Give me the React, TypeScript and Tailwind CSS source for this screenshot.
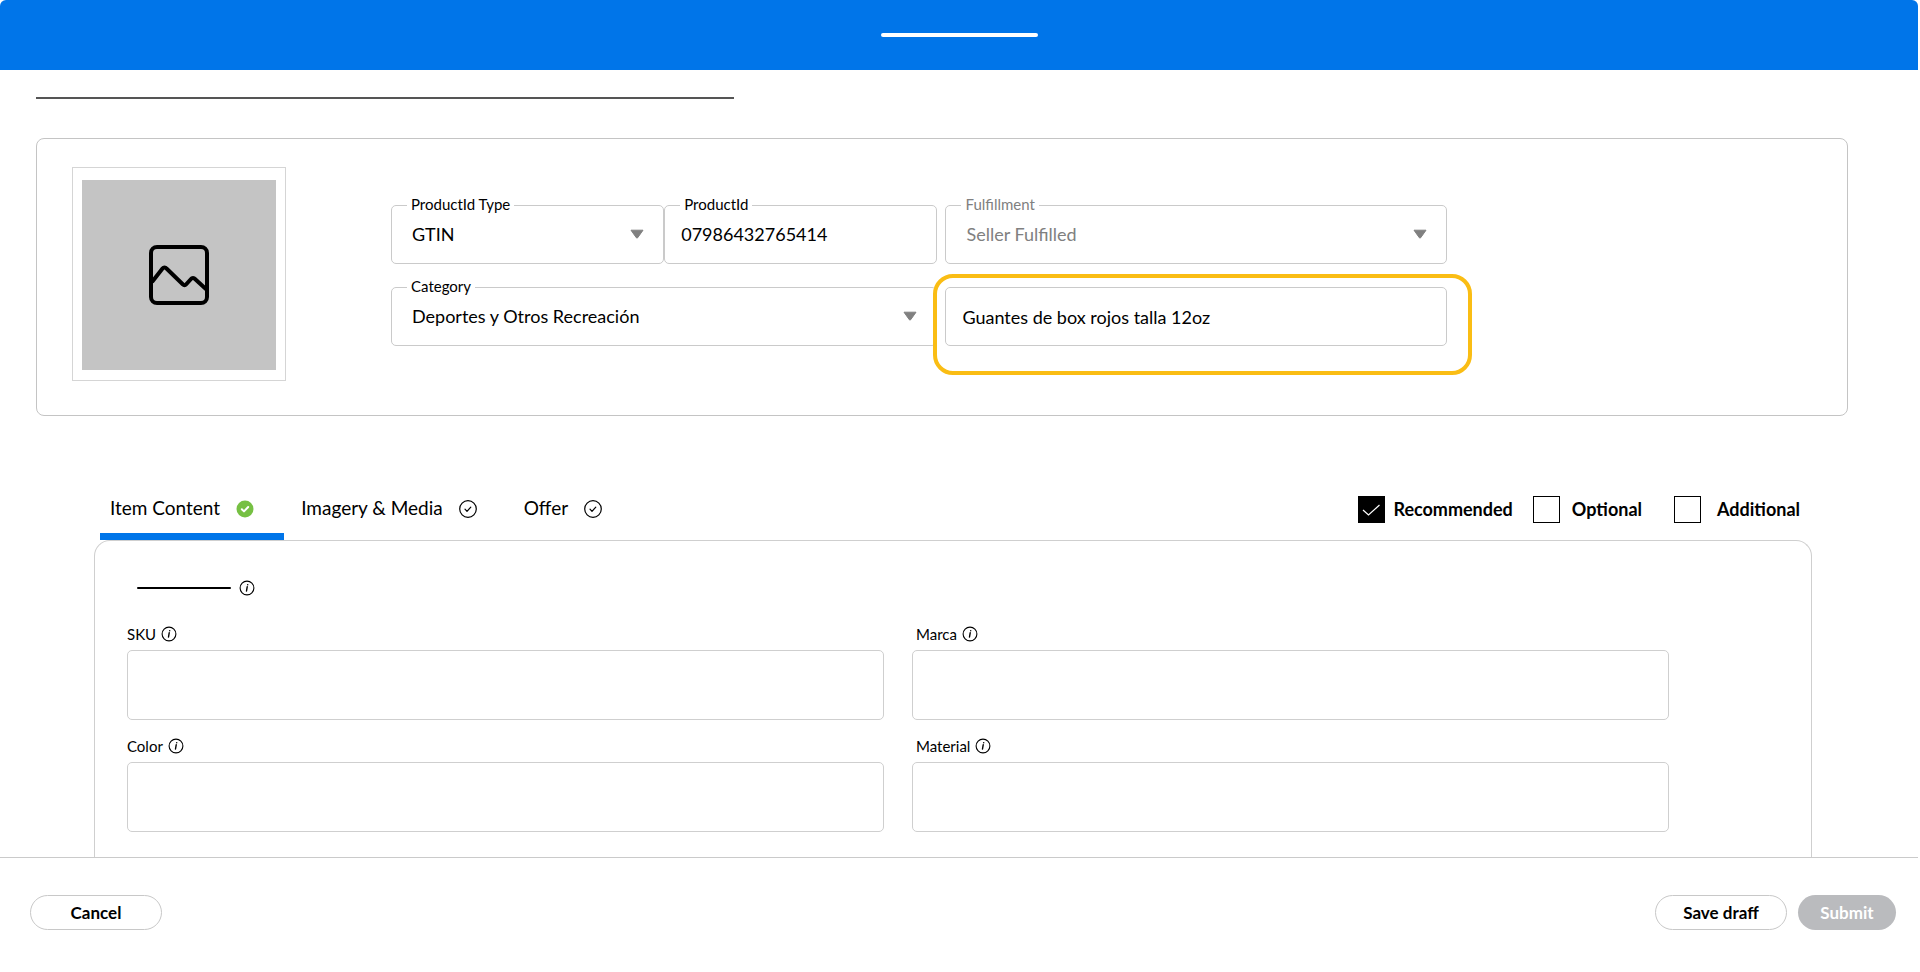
import { useState } from "react";
import clsx from "clsx";

const tabs = [
  { name: "Item Content", done: true },
  { name: "Imagery & Media", done: false },
  { name: "Offer", done: false },
];

const attributes = ["SKU", "Marca", "Color", "Material"];

function Caret() {
  return (
    <svg
      className="pointer-events-none absolute top-6 right-5 text-[#808080]"
      width="14"
      height="10"
      viewBox="0 0 14 10"
      fill="currentColor"
    >
      <path d="M1 1.2h12L7.7 8.7a.9.9 0 0 1-1.4 0z" stroke="currentColor" strokeWidth="1" strokeLinejoin="round" />
    </svg>
  );
}

function InfoIcon() {
  return (
    <svg width="16" height="16" viewBox="0 0 16 16" fill="none" stroke="currentColor">
      <circle cx="8" cy="8" r="6.9" strokeWidth="1.1" />
      <path d="M8.2 6.8 7.5 11" strokeWidth="1.4" strokeLinecap="round" />
      <path d="M8.7 4.7v.1" strokeWidth="1.5" strokeLinecap="round" />
    </svg>
  );
}

function CheckIcon({ done }: { done: boolean }) {
  if (done) {
    return (
      <svg width="18" height="18" viewBox="0 0 18 18" fill="none">
        <circle cx="9" cy="9" r="8.5" fill="#76c043" />
        <path d="m5.8 9.2 2.2 2.2 4.2-4.4" stroke="white" strokeWidth="2" strokeLinecap="round" strokeLinejoin="round" />
      </svg>
    );
  }
  return (
    <svg width="18" height="18" viewBox="0 0 18 18" fill="none" stroke="currentColor">
      <circle cx="9" cy="9" r="8.3" strokeWidth="1.2" />
      <path d="m6 9.2 2 2.1 3.8-4.2" strokeWidth="1.2" strokeLinecap="round" strokeLinejoin="round" />
    </svg>
  );
}

interface FieldProps {
  id: string;
  label?: string;
  value: string;
  select?: boolean;
  disabled?: boolean;
}

function Field({ id, label, value, select, disabled }: FieldProps) {
  const box = clsx(
    "h-[59px] w-full appearance-none rounded-[5px] border border-[#cacaca] bg-white text-lg opacity-100",
    select ? "px-5" : "px-4",
    label && "pb-0.5",
    disabled ? "text-[#808080]" : "text-black"
  );
  return (
    <div className="relative">
      {label && (
        <label
          htmlFor={id}
          className={clsx(
            "absolute -top-[11px] left-4 z-10 bg-white px-1 text-[15px] leading-5",
            disabled ? "text-[#808080]" : "text-black"
          )}
        >
          {label}
        </label>
      )}
      {select ? (
        <>
          <select id={id} disabled={disabled} className={box}>
            <option>{value}</option>
          </select>
          <Caret />
        </>
      ) : (
        <input id={id} type="text" defaultValue={value} aria-label={label ?? "Product name"} className={box} />
      )}
    </div>
  );
}

interface FilterProps {
  label: string;
  checked: boolean;
  onChange: () => void;
  gap: string;
}

function Filter({ label, checked, onChange, gap }: FilterProps) {
  return (
    <label className={clsx("flex items-center text-lg font-bold", gap)}>
      <span className="relative flex size-[27px]">
        <input
          type="checkbox"
          checked={checked}
          onChange={onChange}
          className="size-[27px] appearance-none border border-black bg-white checked:bg-black"
        />
        {checked && (
          <svg className="pointer-events-none absolute inset-0" width="27" height="27" viewBox="0 0 27 27" fill="none">
            <path d="m5 14 5.5 5L21.5 9" stroke="white" strokeWidth="1.2" />
          </svg>
        )}
      </span>
      {label}
    </label>
  );
}

export default function App() {
  const [active, setActive] = useState("Item Content");
  const [filters, setFilters] = useState({ recommended: true, optional: false, additional: false });

  function toggle(key: keyof typeof filters) {
    setFilters({ ...filters, [key]: !filters[key] });
  }

  return (
    <div className="flex min-h-screen flex-col bg-white font-['Lato',sans-serif] text-black">
      <header className="mr-0.5 flex h-[70px] items-center justify-center rounded-t-md bg-[#0075e9]">
        <div className="h-1 w-[157px] rounded-full bg-white" />
      </header>

      <main className="flex flex-1 flex-col">
        <div className="mt-[27px] ml-9 h-0.5 w-[698px] bg-[#555555]" />

        <section className="mt-[39px] mr-[72px] ml-9 flex h-[278px] rounded-lg border border-[#c4c4c4] pt-7 pl-[35px]">
          <div className="size-[214px] shrink-0 border border-[#d5d5d5] px-[9px] pt-3 pb-2.5">
            <div className="flex h-full items-center justify-center bg-[#c4c4c4]">
              <svg width="60" height="60" viewBox="0 0 60 60" fill="none" stroke="black" strokeWidth="4">
                <rect x="2" y="2" width="56" height="56" rx="6" />
                <path d="m3 37 10.5-13.5a2.5 2.5 0 0 1 4 0L34 39.5a2 2 0 0 0 3 0l5-5.500a2.500 2.500 0 0 1 4 0L58 45" strokeLinejoin="round" />
              </svg>
            </div>
          </div>

          <form className="mt-[38px] mr-[400px] ml-[105px] grid flex-1 grid-cols-[547fr_502fr] content-start gap-x-2 gap-y-[23px]">
            <div className="grid grid-cols-2">
              <Field id="product-type" label="ProductId Type" value="GTIN" select />
              <Field id="product-id" label="ProductId" value="07986432765414" />
            </div>
            <Field id="fulfillment" label="Fulfillment" value="Seller Fulfilled" select disabled />
            <Field id="category" label="Category" value="Deportes y Otros Recreación" select />
            <div className="relative">
              <Field id="product-name" value="Guantes de box rojos talla 12oz" />
              <div className="pointer-events-none absolute -top-[13px] -right-[25px] -bottom-[29px] -left-3 rounded-[20px] border-4 border-[#fabd14]" />
            </div>
          </form>
        </section>

        <div className="mt-[74px] mr-[108px] ml-[100px] flex h-[50px] justify-between">
          <div role="tablist" className="flex gap-[7px]">
            {tabs.map((tab) => (
              <button
                key={tab.name}
                role="tab"
                aria-selected={active === tab.name}
                onClick={() => setActive(tab.name)}
                className={clsx(
                  "flex items-start gap-4 border-b-7 pr-[30px] pl-2.5 text-[19px] leading-9",
                  active === tab.name ? "border-[#0075e9]" : "border-transparent"
                )}
              >
                {tab.name}
                <span className="flex h-[38px] items-center">
                  <CheckIcon done={tab.done} />
                </span>
              </button>
            ))}
          </div>
          <div className="mr-3 flex h-[38px] items-center">
            <Filter label="Recommended" checked={filters.recommended} onChange={() => toggle("recommended")} gap="mr-5 gap-2" />
            <Filter label="Optional" checked={filters.optional} onChange={() => toggle("optional")} gap="mr-8 gap-3" />
            <Filter label="Additional" checked={filters.additional} onChange={() => toggle("additional")} gap="gap-4" />
          </div>
        </div>

        <section className="mr-[108px] ml-[94px] flex-1 rounded-t-2xl border border-b-0 border-[#cfcfcf] pr-[142px] pl-8">
          <div className="mt-[39px] flex items-center gap-2 pl-2.5">
            <div className="h-0.5 w-[94px] rounded-full bg-black" />
            <InfoIcon />
          </div>
          <div className="mt-7 grid grid-cols-2 gap-x-7 gap-y-4">
            {attributes.map((name, i) => (
              <div key={name}>
                <div className={clsx("mb-1.5 flex h-5 items-center gap-[5px] text-[15px]", i % 2 === 1 && "pl-1")}>
                  <label htmlFor={name}>{name}</label>
                  <InfoIcon />
                </div>
                <input id={name} type="text" className="block h-[70px] w-full rounded-[5px] border border-[#cfcfcf] px-4 text-lg" />
              </div>
            ))}
          </div>
        </section>
      </main>

      <footer className="mr-0.5 flex h-[115px] items-start gap-[11px] border-t border-[#cacaca] pt-[37px] pr-[22px] pl-[30px] text-[17px] font-bold">
        <button className="mr-auto h-[35px] w-[132px] rounded-full border border-[#c8c8c8]">Cancel</button>
        <button className="h-[35px] w-[132px] rounded-full border border-[#c8c8c8]">Save draff</button>
        <button className="h-[35px] w-[98px] rounded-full bg-[#babbbe] text-white">Submit</button>
      </footer>
    </div>
  );
}
